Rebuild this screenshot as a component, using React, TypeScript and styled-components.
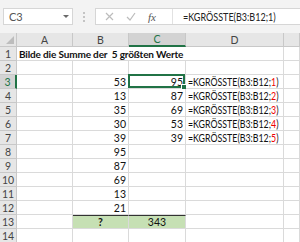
import React from "react";
import styled, { createGlobalStyle } from "styled-components";

const GlobalStyle = createGlobalStyle`
  html, body {
    margin: 0;
    padding: 0;
    background: #fff;
    width: 300px;
    height: 242px;
    overflow: hidden;
  }
`;

const GREEN = "#217346";

const Sheet = styled.div`
  width: 300px;
  height: 242px;
  overflow: hidden;
  display: flex;
  flex-direction: column;
  font-family: Lato, "Liberation Sans", sans-serif;
  background: #fff;
`;

const Toolbar = styled.div`
  height: 33px;
  flex: none;
  display: flex;
  align-items: flex-start;
  padding: 8px 0 0 3px;
  box-sizing: border-box;
  background: #f3f3f3;
`;

const NameBox = styled.div`
  width: 70px;
  height: 17px;
  box-sizing: border-box;
  background: #fff;
  border: 1px solid #d6d6d6;
  display: flex;
  align-items: center;
  justify-content: space-between;
  padding: 0 3px 0 5px;
  font-size: 11px;
  color: #555;
`;

const Caret = styled.span`
  width: 0;
  height: 0;
  border-left: 3px solid transparent;
  border-right: 3px solid transparent;
  border-top: 3px solid #6a6a6a;
`;

const Dots = styled.div`
  width: 22px;
  height: 17px;
  display: flex;
  flex-direction: column;
  align-items: center;
  justify-content: center;
  gap: 2px;

  span {
    width: 2px;
    height: 2px;
    background: #c4c4c4;
  }
`;

const FormulaBar = styled.div`
  flex: 1;
  height: 17px;
  display: flex;
  box-sizing: border-box;
  background: #fff;
  border: 1px solid #d6d6d6;
  border-right: none;
`;

const Tools = styled.div`
  width: 77px;
  display: flex;
  align-items: center;
  padding-left: 9px;
  gap: 12px;
  box-sizing: border-box;
  border-right: 1px solid #e2e2e2;
`;

const Fx = styled.span`
  font-family: "Liberation Serif", serif;
  font-style: italic;
  font-size: 11px;
  color: #555;
`;

const FormulaText = styled.div`
  flex: 1;
  display: flex;
  align-items: center;
  padding-left: 10px;
  font-size: 10.5px;
  color: #222;
  white-space: nowrap;
`;

// Lato runs wider than the sheet's Calibri; narrow the formula strings
const Condensed = styled.span<{ $scale?: number }>`
  display: inline-block;
  transform: scaleX(${(p) => p.$scale ?? 0.86});
  transform-origin: left center;
`;

const Grid = styled.div`
  display: grid;
  grid-template-columns: 17px 56px 56px 57px 98px 16px;
  grid-auto-rows: 14px;
`;

const Head = styled.div<{ $active?: boolean; $row?: boolean }>`
  box-sizing: border-box;
  background: ${(p) => (p.$active ? "#d3d3d3" : "#e6e6e6")};
  color: ${(p) => (p.$active ? GREEN : "#444")};
  border-right: 1px solid ${(p) => (p.$row && p.$active ? GREEN : "#c8c8c8")};
  border-bottom: 1px solid ${(p) => (!p.$row && p.$active ? GREEN : "#c8c8c8")};
  ${(p) => (p.$row && p.$active ? "border-right-width: 2px;" : "")}
  ${(p) => (!p.$row && p.$active ? "border-bottom-width: 2px;" : "")}
  font-size: 10.5px;
  display: flex;
  align-items: center;
  justify-content: center;
  position: relative;
  overflow: hidden;
`;

const CornerMark = styled.span`
  position: absolute;
  right: 2px;
  bottom: 2px;
  width: 0;
  height: 0;
  border-left: 8px solid transparent;
  border-bottom: 8px solid #bdbdbd;
`;

const Cell = styled.div<{ $align?: string; $fill?: boolean; $topLine?: boolean }>`
  box-sizing: border-box;
  border-right: 1px solid #dadada;
  border-bottom: 1px solid #dadada;
  ${(p) => (p.$topLine ? "border-top: 1px solid #333;" : "")}
  background: ${(p) => (p.$fill ? "#c6e0b4" : "#fff")};
  font-size: 10.5px;
  color: #111;
  display: flex;
  align-items: center;
  justify-content: ${(p) => p.$align || "flex-start"};
  padding: 0 2px;
  white-space: nowrap;
  position: relative;
`;

const Title = styled(Cell)`
  grid-column: span 3;
  font-weight: 700;
  font-size: 10px;
  letter-spacing: -0.15px;
  border-right: none;
  z-index: 1;
  background: transparent;
`;

const Selection = styled.div`
  position: absolute;
  inset: -1px 0 0 -1px;
  border: 2px solid ${GREEN};
  pointer-events: none;

  &::after {
    content: "";
    position: absolute;
    right: -4px;
    bottom: -4px;
    width: 4px;
    height: 4px;
    background: ${GREEN};
    border: 1px solid #fff;
  }
`;

const Red = styled.span`
  color: #e00;
`;

const values = [53, 13, 35, 30, 39, 95, 87, 69, 13, 21];
const largest = [95, 87, 69, 53, 39];

const App: React.FC = () => {
  const rows = [];

  for (let r = 2; r <= 14; r++) {
    const idx = r - 3;
    const inData = idx >= 0 && idx < values.length;
    const top = largest[idx];
    const isSum = r === 13;

    rows.push(
      <React.Fragment key={r}>
        <Head $row $active={r === 3}>{r}</Head>
        <Cell />
        <Cell $align={isSum ? "center" : "flex-end"} $fill={isSum} $topLine={isSum}>
          {inData ? values[idx] : isSum ? <b>?</b> : ""}
        </Cell>
        <Cell $align={isSum ? "center" : "flex-end"} $fill={isSum} $topLine={isSum}>
          {top !== undefined ? top : isSum ? 343 : ""}
          {r === 3 && <Selection />}
        </Cell>
        <Cell>
          {top !== undefined && (
            <Condensed $scale={0.84}>
              =KGRÖSSTE(B3:B12;<Red>{idx + 1}</Red>)
            </Condensed>
          )}
        </Cell>
        <Cell />
      </React.Fragment>
    );
  }

  return (
    <Sheet>
      <GlobalStyle />
      <Toolbar>
        <NameBox>
          C3
          <Caret />
        </NameBox>
        <Dots>
          <span />
          <span />
          <span />
        </Dots>
        <FormulaBar>
          <Tools>
            <svg width="9" height="9" viewBox="0 0 9 9">
              <path d="M1 1 L8 8 M8 1 L1 8" stroke="#bcbcbc" strokeWidth="1.2" fill="none" />
            </svg>
            <svg width="10" height="9" viewBox="0 0 10 9">
              <path d="M1 5 L4 8 L9 1" stroke="#bcbcbc" strokeWidth="1.2" fill="none" />
            </svg>
            <Fx>fx</Fx>
          </Tools>
          <FormulaText>
            <Condensed>=KGRÖSSTE(B3:B12;1)</Condensed>
          </FormulaText>
        </FormulaBar>
      </Toolbar>
      <Grid>
        <Head>
          <CornerMark />
        </Head>
        <Head>A</Head>
        <Head>B</Head>
        <Head $active>C</Head>
        <Head>D</Head>
        <Head />

        <Head $row>1</Head>
        <Title>Bilde die Summe der&nbsp; 5 größten Werte</Title>
        <Cell />
        <Cell />

        {rows}
      </Grid>
    </Sheet>
  );
};

export default App;
